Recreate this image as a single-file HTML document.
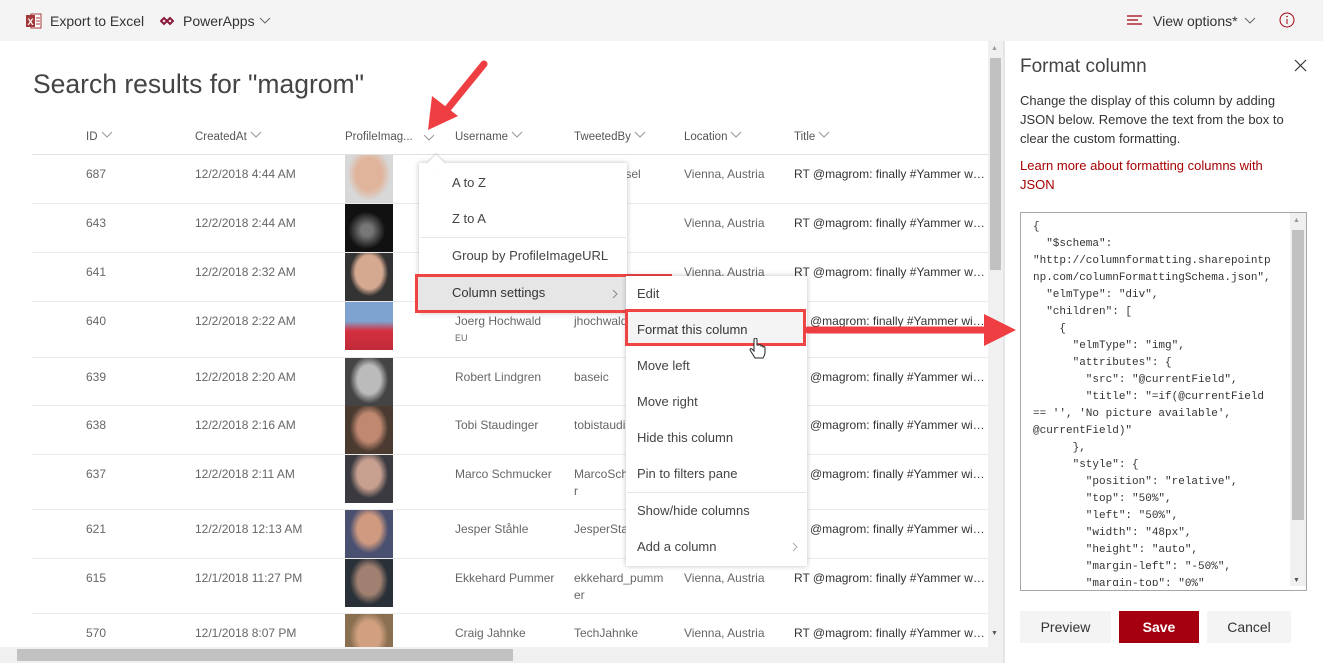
<!DOCTYPE html>
<html><head><meta charset="utf-8"><style>
*{margin:0;padding:0;box-sizing:border-box}
body{width:1323px;height:663px;overflow:hidden;background:#fff;font-family:"Liberation Sans",sans-serif;position:relative;color:#333}
.a{position:absolute;white-space:nowrap}
.top{position:absolute;left:0;top:0;width:1323px;height:41px;background:#f4f4f4}
.t13{font-size:12px}
.g{color:#666}
.hd{font-size:11.5px;color:#555}
.hd svg{margin-left:3px;vertical-align:2px}
.ti{position:absolute;left:794px;width:192px;overflow:hidden;text-overflow:ellipsis;white-space:nowrap;font-size:12px;color:#333}
.ti2{position:absolute;left:810px;width:176px;overflow:hidden;text-overflow:ellipsis;white-space:nowrap;font-size:12px;color:#333}
.sep{position:absolute;left:32px;width:956px;height:1px;background:#eaeaea}
.ph{position:absolute;left:345px;width:48px;height:48px}
.mi{position:absolute;font-size:13px;color:#444}
.code{position:absolute;left:1033px;top:219px;font-family:"Liberation Mono",monospace;font-size:11px;line-height:17px;color:#333;white-space:pre}
.btn{position:absolute;top:611px;height:32px;font-size:14px;display:flex;align-items:center;justify-content:center}
</style></head><body>
<div class="top"></div>
<svg class="a" style="left:26px;top:13px" width="16" height="16"><rect x="5" y="1" width="10" height="14" fill="#fff" stroke="#a4373a"/><rect x="0" y="2" width="9" height="12" fill="#a4373a"/><text x="1.5" y="12" font-size="9" fill="#fff" font-family="Liberation Sans" font-weight="bold">X</text><line x1="10" y1="5" x2="14" y2="5" stroke="#a4373a"/><line x1="10" y1="8" x2="14" y2="8" stroke="#a4373a"/><line x1="10" y1="11" x2="14" y2="11" stroke="#a4373a"/></svg>
<div class="a" style="left:50px;top:13px;font-size:14px;color:#333">Export to Excel</div>
<svg class="a" style="left:160px;top:16px" width="14" height="10"><path d="M1 5 L4 2 L7 5 L4 8Z M7 5 L10 2 L13 5 L10 8Z" fill="none" stroke="#8b1a3a" stroke-width="2"/></svg>
<div class="a" style="left:183px;top:13px;font-size:14px;color:#333">PowerApps</div>
<svg class="a" style="left:259px;top:17px" width="12" height="8"><path d="M1 1 L6 6 L11 1" fill="none" stroke="#666"/></svg>
<svg class="a" style="left:1127px;top:15px" width="16" height="12"><path d="M0 1H15M0 5H11M0 9H15" stroke="#a4000f" stroke-width="1.2"/></svg>
<div class="a" style="left:1153px;top:13px;font-size:14px;color:#333">View options*</div>
<svg class="a" style="left:1244px;top:17px" width="12" height="8"><path d="M1 1 L6 6 L11 1" fill="none" stroke="#666"/></svg>
<svg class="a" style="left:1279px;top:12px" width="16" height="16"><circle cx="8" cy="8" r="7" fill="none" stroke="#a4000f"/><line x1="8" y1="7" x2="8" y2="12" stroke="#a4000f"/><circle cx="8" cy="4.5" r=".8" fill="#a4000f"/></svg>

<div class="a" style="left:33px;top:69px;font-size:26.5px;color:#444">Search results for "magrom"</div>

<div class="a hd" style="left:86px;top:131px">ID<svg width="12" height="7"><path d="M1 1L6 6L11 1" fill="none" stroke="#999"/></svg></div>
<div class="a hd" style="left:195px;top:131px">CreatedAt<svg width="12" height="7"><path d="M1 1L6 6L11 1" fill="none" stroke="#999"/></svg></div>
<div class="a hd" style="left:345px;top:131px">ProfileImag...</div>
<svg class="a" style="left:423px;top:134px" width="12" height="7"><path d="M1 1L6 6L11 1" fill="none" stroke="#999"/></svg>
<div class="a hd" style="left:455px;top:131px">Username<svg width="12" height="7"><path d="M1 1L6 6L11 1" fill="none" stroke="#999"/></svg></div>
<div class="a hd" style="left:574px;top:131px">TweetedBy<svg width="12" height="7"><path d="M1 1L6 6L11 1" fill="none" stroke="#999"/></svg></div>
<div class="a hd" style="left:684px;top:131px">Location<svg width="12" height="7"><path d="M1 1L6 6L11 1" fill="none" stroke="#999"/></svg></div>
<div class="a hd" style="left:794px;top:131px">Title<svg width="12" height="7"><path d="M1 1L6 6L11 1" fill="none" stroke="#999"/></svg></div>
<div class="sep" style="top:154px;background:#e1e1e1"></div>

<div class="sep" style="top:203px"></div><div class="sep" style="top:252px"></div><div class="sep" style="top:301px"></div><div class="sep" style="top:357px"></div><div class="sep" style="top:405px"></div><div class="sep" style="top:454px"></div><div class="sep" style="top:509px"></div><div class="sep" style="top:558px"></div><div class="sep" style="top:613px"></div>

<div class="ph" style="top:155px;background:radial-gradient(ellipse 45% 55% at 50% 40%,#e0b49a 60%,#d8d8d8 100%)"></div>
<div class="ph" style="top:204px;background:radial-gradient(circle at 45% 55%,#777 15%,#111 50%)"></div>
<div class="ph" style="top:253px;background:radial-gradient(ellipse 40% 50% at 50% 40%,#d5a890 70%,#333 100%)"></div>
<div class="ph" style="top:302px;background:linear-gradient(#7fa3d0,#7fa3d0 40%,#d43040 60%,#c02a38)"></div>
<div class="ph" style="top:358px;background:radial-gradient(ellipse 40% 50% at 50% 45%,#bbb 60%,#444 100%)"></div>
<div class="ph" style="top:406px;background:radial-gradient(ellipse 40% 50% at 50% 45%,#c08870 60%,#4a3a30 100%)"></div>
<div class="ph" style="top:455px;background:radial-gradient(ellipse 40% 50% at 50% 40%,#c8a090 60%,#3a3a40 100%)"></div>
<div class="ph" style="top:510px;background:radial-gradient(ellipse 40% 50% at 50% 40%,#d09a80 60%,#4a5070 100%)"></div>
<div class="ph" style="top:559px;background:radial-gradient(ellipse 40% 50% at 50% 45%,#a08070 60%,#2a3038 100%)"></div>
<div class="ph" style="top:614px;background:radial-gradient(ellipse 40% 50% at 50% 45%,#d0a080 60%,#8a7050 100%)"></div>

<div class="a t13 g" style="left:86px;top:167px">687</div><div class="a t13 g" style="left:195px;top:167px">12/2/2018 4:44 AM</div><div class="a t13 g" style="left:612px;top:167px">ensel</div><div class="a t13 g" style="left:684px;top:167px">Vienna, Austria</div><div class="ti" style="top:167px">RT @magrom: finally #Yammer will be available</div>
<div class="a t13 g" style="left:86px;top:216px">643</div><div class="a t13 g" style="left:195px;top:216px">12/2/2018 2:44 AM</div><div class="a t13 g" style="left:684px;top:216px">Vienna, Austria</div><div class="ti" style="top:216px">RT @magrom: finally #Yammer will be available</div>
<div class="a t13 g" style="left:86px;top:265px">641</div><div class="a t13 g" style="left:195px;top:265px">12/2/2018 2:32 AM</div><div class="a t13 g" style="left:684px;top:265px">Vienna, Austria</div><div class="ti" style="top:265px">RT @magrom: finally #Yammer will be available</div>
<div class="a t13 g" style="left:86px;top:314px">640</div><div class="a t13 g" style="left:195px;top:314px">12/2/2018 2:22 AM</div><div class="a t13 g" style="left:455px;top:314px">Joerg Hochwald</div><div class="a g" style="left:455px;top:333px;font-size:9px">EU</div><div class="a t13 g" style="left:574px;top:314px">jhochwald</div><div class="ti2" style="top:314px">@magrom: finally #Yammer will be available</div>
<div class="a t13 g" style="left:86px;top:370px">639</div><div class="a t13 g" style="left:195px;top:370px">12/2/2018 2:20 AM</div><div class="a t13 g" style="left:455px;top:370px">Robert Lindgren</div><div class="a t13 g" style="left:574px;top:370px">baseic</div><div class="ti2" style="top:370px">@magrom: finally #Yammer will be available</div>
<div class="a t13 g" style="left:86px;top:418px">638</div><div class="a t13 g" style="left:195px;top:418px">12/2/2018 2:16 AM</div><div class="a t13 g" style="left:455px;top:418px">Tobi Staudinger</div><div class="a t13 g" style="left:574px;top:418px">tobistaudi</div><div class="ti2" style="top:418px">@magrom: finally #Yammer will be available</div>
<div class="a t13 g" style="left:86px;top:467px">637</div><div class="a t13 g" style="left:195px;top:467px">12/2/2018 2:11 AM</div><div class="a t13 g" style="left:455px;top:467px">Marco Schmucker</div><div class="a t13 g" style="left:574px;top:467px">MarcoSch</div><div class="a t13 g" style="left:574px;top:484px">r</div><div class="ti2" style="top:467px">@magrom: finally #Yammer will be available</div>
<div class="a t13 g" style="left:86px;top:522px">621</div><div class="a t13 g" style="left:195px;top:522px">12/2/2018 12:13 AM</div><div class="a t13 g" style="left:455px;top:522px">Jesper Ståhle</div><div class="a t13 g" style="left:574px;top:522px">JesperSta</div><div class="ti2" style="top:522px">@magrom: finally #Yammer will be available</div>
<div class="a t13 g" style="left:86px;top:571px">615</div><div class="a t13 g" style="left:195px;top:571px">12/1/2018 11:27 PM</div><div class="a t13 g" style="left:455px;top:571px">Ekkehard Pummer</div><div class="a t13 g" style="left:574px;top:571px">ekkehard_pumm</div><div class="a t13 g" style="left:574px;top:588px">er</div><div class="a t13 g" style="left:684px;top:571px">Vienna, Austria</div><div class="ti" style="top:571px">RT @magrom: finally #Yammer will be available</div>
<div class="a t13 g" style="left:86px;top:626px">570</div><div class="a t13 g" style="left:195px;top:626px">12/1/2018 8:07 PM</div><div class="a t13 g" style="left:455px;top:626px">Craig Jahnke</div><div class="a t13 g" style="left:574px;top:626px">TechJahnke</div><div class="a t13 g" style="left:684px;top:626px">Vienna, Austria</div><div class="ti" style="top:626px">RT @magrom: finally #Yammer will be available</div>

<div class="a" style="left:988px;top:41px;width:15px;height:606px;background:#f0f0f0"></div>
<div class="a" style="left:990px;top:58px;width:11px;height:212px;background:#c1c1c1"></div>
<div class="a" style="left:991px;top:45px;font-size:7px;color:#999">▲</div>
<div class="a" style="left:991px;top:630px;font-size:7px;color:#555">▼</div>
<div class="a" style="left:0;top:647px;width:1003px;height:16px;background:#f0f0f0"></div>
<div class="a" style="left:17px;top:649px;width:496px;height:12px;background:#c1c1c1"></div>
<div class="a" style="left:1003px;top:41px;width:2px;height:622px;background:#e6e6e6"></div>

<div class="a" style="left:419px;top:163px;width:208px;height:150px;background:#fff;box-shadow:0 0 5px rgba(0,0,0,.25)"></div>
<div class="a" style="left:430px;top:157px;width:12px;height:12px;background:#fff;transform:rotate(45deg);box-shadow:-1px -1px 2px rgba(0,0,0,.15)"></div>
<div class="mi" style="left:452px;top:175px">A to Z</div>
<div class="mi" style="left:452px;top:211px">Z to A</div>
<div class="a" style="left:420px;top:237px;width:206px;height:1px;background:#e6e6e6"></div>
<div class="mi" style="left:452px;top:248px">Group by ProfileImageURL</div>
<div class="a" style="left:415px;top:274px;width:257px;height:39px;background:#e6e6e6;border:3px solid #ef4444"></div>
<div class="mi" style="left:452px;top:285px;color:#333">Column settings</div>
<svg class="a" style="left:612px;top:289px" width="6" height="10"><path d="M1 1L5 5L1 9" fill="none" stroke="#888"/></svg>

<div class="a" style="left:626px;top:276px;width:181px;height:290px;background:#fff;box-shadow:0 0 5px rgba(0,0,0,.25)"></div>
<div class="mi" style="left:637px;top:286px">Edit</div>
<div class="a" style="left:625px;top:309px;width:181px;height:37px;background:#f4f4f4;border:3px solid #ef4444"></div>
<div class="mi" style="left:637px;top:322px;color:#333">Format this column</div>
<div class="mi" style="left:637px;top:358px">Move left</div>
<div class="mi" style="left:637px;top:394px">Move right</div>
<div class="mi" style="left:637px;top:430px">Hide this column</div>
<div class="mi" style="left:637px;top:466px">Pin to filters pane</div>
<div class="a" style="left:627px;top:492px;width:179px;height:1px;background:#e6e6e6"></div>
<div class="mi" style="left:637px;top:503px">Show/hide columns</div>
<div class="mi" style="left:637px;top:539px">Add a column</div>
<svg class="a" style="left:792px;top:542px" width="6" height="10"><path d="M1 1L5 5L1 9" fill="none" stroke="#aaa"/></svg>
<svg class="a" style="left:748px;top:338px" width="20" height="26"><path d="M6 2 V13 L4 11 Q2 10 2 12 L7 20 H15 Q17 17 17 14 V10 Q17 8 15 9 Q15 7 13 8 Q13 6 11 7 V7 H9 V2 Q9 0 7.5 0 Q6 0 6 2Z" fill="#fff" stroke="#222" stroke-width="1"/></svg>

<svg class="a" style="left:0;top:0" width="1323" height="663">
<line x1="484" y1="64" x2="445" y2="112" stroke="#ef3e42" stroke-width="7" stroke-linecap="round"/>
<polygon points="428,130 432,96 458,116" fill="#ef3e42"/>
<line x1="808" y1="330" x2="988" y2="330" stroke="#ef3e42" stroke-width="7" stroke-linecap="round"/>
<polygon points="1016,330 984,314 984,346" fill="#ef3e42"/>
</svg>

<div class="a" style="left:1020px;top:56px;font-size:19px;color:#444">Format column</div>
<svg class="a" style="left:1294px;top:59px" width="13" height="13"><path d="M1 1L12 12M12 1L1 12" stroke="#333" stroke-width="1.2"/></svg>
<div class="a" style="left:1020px;top:91px;font-size:13px;line-height:19px;color:#333;white-space:normal;width:286px">Change the display of this column by adding JSON below. Remove the text from the box to clear the custom formatting.</div>
<div class="a" style="left:1020px;top:156px;font-size:13px;line-height:19px;color:#a80000;white-space:normal;width:270px">Learn more about formatting columns with JSON</div>
<div class="a" style="left:1020px;top:212px;width:287px;height:379px;border:1px solid #a6a6a6;overflow:hidden">
<div class="a" style="left:269px;top:0;width:16px;height:377px;background:#f0f0f0"></div>
<div class="a" style="left:271px;top:17px;width:12px;height:290px;background:#c1c1c1"></div>
<div class="a" style="left:272px;top:4px;font-size:7px;color:#999">▲</div>
<div class="a" style="left:272px;top:364px;font-size:7px;color:#555">▼</div>
</div>
<div class="code">{
  "$schema":
"http://columnformatting.sharepointp
np.com/columnFormattingSchema.json",
  "elmType": "div",
  "children": [
    {
      "elmType": "img",
      "attributes": {
        "src": "@currentField",
        "title": "=if(@currentField
== '', 'No picture available',
@currentField)"
      },
      "style": {
        "position": "relative",
        "top": "50%",
        "left": "50%",
        "width": "48px",
        "height": "auto",
        "margin-left": "-50%",
        "margin-top": "0%"</div>
<div class="a" style="left:1021px;top:586px;width:285px;height:4px;background:#fff"></div>
<div class="btn" style="left:1020px;width:91px;background:#f4f4f4;color:#333">Preview</div>
<div class="btn" style="left:1119px;width:80px;background:#a4000f;color:#fff;font-weight:bold">Save</div>
<div class="btn" style="left:1207px;width:84px;background:#f4f4f4;color:#333">Cancel</div>
</body></html>
